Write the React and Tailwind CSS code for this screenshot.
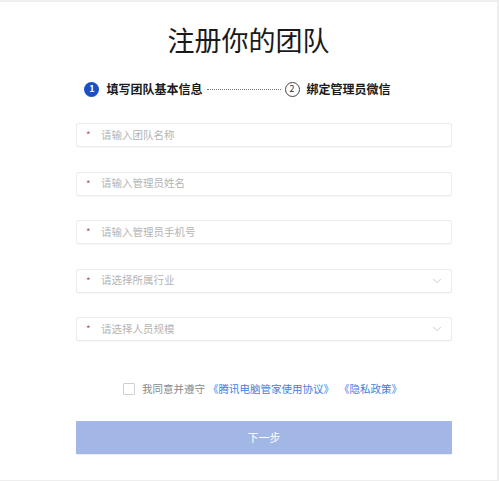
import React from 'react';
import { ChevronDown } from 'lucide-react';

const font = { fontFamily: '"Noto Sans CJK SC", "Noto Sans", sans-serif' };

const Field = ({ placeholder, select }) => (
    <div className="h-[24px] flex items-center border border-[#ececec] rounded-[2px] bg-white shadow-[0_1px_1px_rgba(0,0,0,0.03)]">
        <span className="w-[24px] pl-[9px] text-[10px] text-[#b5626f] leading-none">*</span>
        <span className="flex-1 text-[10.5px] text-[#b4b4b4] leading-none">{placeholder}</span>
        {select && <ChevronDown size={14} strokeWidth={1.2} className="mr-[7px] text-[#b8b8b8]" />}
    </div>
);

const App = () => {
    return (
        <div className="w-[499px] h-[481px] bg-white border-t-2 border-r-2 border-b border-[#eeeeee] overflow-hidden" style={font}>
            <h1 className="pt-[18px] text-center text-[27px] leading-[40px] text-[#1a1a1a]">注册你的团队</h1>

            {/* Steps */}
            <div className="mt-[21px] flex items-center justify-center h-[16px] pr-[22px]">
                <div className="w-[15px] h-[15px] rounded-full bg-[#1d4fc4] text-white text-[9px] font-bold flex items-center justify-center">1</div>
                <span className="ml-[7px] text-[12px] font-bold text-[#1a1a1a]">填写团队基本信息</span>
                <div className="mx-[4px] w-[74px] border-t border-dotted border-[#777]"></div>
                <div className="w-[15px] h-[15px] rounded-full border border-[#444] text-[#333] text-[9px] flex items-center justify-center">2</div>
                <span className="ml-[7px] text-[12px] font-bold text-[#1a1a1a]">绑定管理员微信</span>
            </div>

            <div className="ml-[76px] w-[376px] mt-[26px] flex flex-col gap-[24.5px]">
                <Field placeholder="请输入团队名称" />
                <Field placeholder="请输入管理员姓名" />
                <Field placeholder="请输入管理员手机号" />
                <Field placeholder="请选择所属行业" select />
                <Field placeholder="请选择人员规模" select />
            </div>

            <div className="mt-[41px] ml-[123px] flex items-center h-[14px]">
                <div className="w-[12px] h-[12px] border border-[#cfcfcf] rounded-[1px] bg-white"></div>
                <span className="ml-[7px] text-[10.5px] text-[#888]">我同意并遵守</span>
                <span className="ml-[3px] text-[10.5px] text-[#3f7fe0]">《腾讯电脑管家使用协议》</span>
                <span className="ml-[5px] text-[10.5px] text-[#3f7fe0]">《隐私政策》</span>
            </div>

            <button className="mt-[25px] ml-[76px] w-[376px] h-[33px] bg-[#a3b7e6] text-white text-[11px] rounded-[1px] shadow-[0_1px_1px_rgba(0,0,0,0.08)]">
                下一步
            </button>
        </div>
    );
};

export default App;
